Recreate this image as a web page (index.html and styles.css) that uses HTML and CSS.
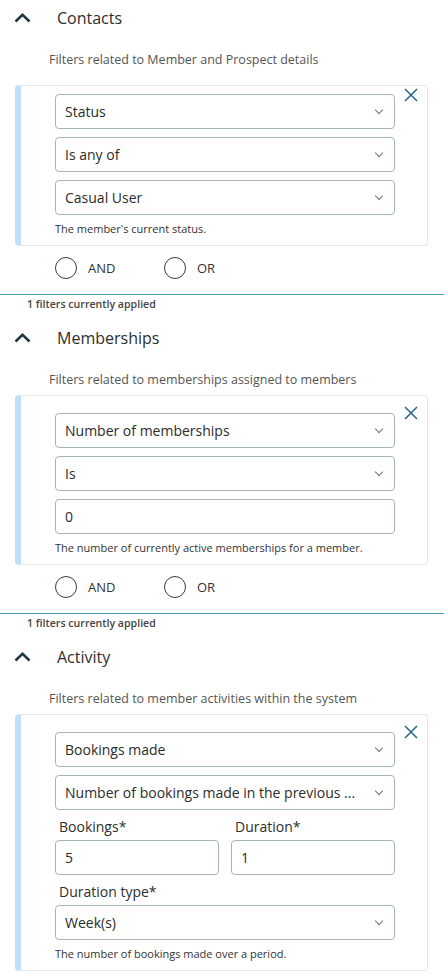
FILE: index.html
```html
<!DOCTYPE html>
<html lang="en">
  <head>
    <meta charset="UTF-8" />
    <meta name="viewport" content="width=device-width, initial-scale=1.0" />
    <title>Filters</title>
    <link rel="stylesheet" href="styles.css">
  </head>

  <body>
    <section class="filter-section first">
      <div class="section-head">
        <svg class="head-chevron" width="17" height="10" viewBox="0 0 17 10"><path d="M1.5 8.5 L8.5 1.8 L15.5 8.5" /></svg>
        <h3>Contacts</h3>
      </div>
      <p class="section-desc">Filters related to Member and Prospect details</p>

      <div class="filter-card">
        <button class="close-btn" aria-label="Remove filter">
          <svg width="14" height="14" viewBox="0 0 14 14"><path d="M1 1 L13 13 M13 1 L1 13" /></svg>
        </button>
        <div class="select">Status<span class="caret"></span></div>
        <div class="select">Is any of<span class="caret"></span></div>
        <div class="select">Casual User<span class="caret"></span></div>
        <p class="help">The member's current status.</p>
      </div>

      <div class="logic">
        <label><span class="radio"></span>AND</label>
        <label><span class="radio"></span>OR</label>
      </div>
      <div class="applied">1 filters currently applied</div>
    </section>

    <section class="filter-section">
      <div class="section-head">
        <svg class="head-chevron" width="17" height="10" viewBox="0 0 17 10"><path d="M1.5 8.5 L8.5 1.8 L15.5 8.5" /></svg>
        <h3>Memberships</h3>
      </div>
      <p class="section-desc">Filters related to memberships assigned to members</p>

      <div class="filter-card">
        <button class="close-btn" aria-label="Remove filter">
          <svg width="14" height="14" viewBox="0 0 14 14"><path d="M1 1 L13 13 M13 1 L1 13" /></svg>
        </button>
        <div class="select">Number of memberships<span class="caret"></span></div>
        <div class="select">Is<span class="caret"></span></div>
        <input class="text-input" type="text" value="0" />
        <p class="help">The number of currently active memberships for a member.</p>
      </div>

      <div class="logic">
        <label><span class="radio"></span>AND</label>
        <label><span class="radio"></span>OR</label>
      </div>
      <div class="applied">1 filters currently applied</div>
    </section>

    <section class="filter-section">
      <div class="section-head">
        <svg class="head-chevron" width="17" height="10" viewBox="0 0 17 10"><path d="M1.5 8.5 L8.5 1.8 L15.5 8.5" /></svg>
        <h3>Activity</h3>
      </div>
      <p class="section-desc">Filters related to member activities within the system</p>

      <div class="filter-card">
        <button class="close-btn" aria-label="Remove filter">
          <svg width="14" height="14" viewBox="0 0 14 14"><path d="M1 1 L13 13 M13 1 L1 13" /></svg>
        </button>
        <div class="select">Bookings made<span class="caret"></span></div>
        <div class="select">Number of bookings made in the previous ...<span class="caret"></span></div>
        <div class="field-row">
          <div class="field">
            <label class="field-label">Bookings*</label>
            <input class="text-input" type="text" value="5" />
          </div>
          <div class="field">
            <label class="field-label">Duration*</label>
            <input class="text-input" type="text" value="1" />
          </div>
        </div>
        <div class="field">
          <label class="field-label">Duration type*</label>
          <div class="select">Week(s)<span class="caret"></span></div>
        </div>
        <p class="help">The number of bookings made over a period.</p>
      </div>
    </section>
  </body>
</html>
```

FILE: styles.css
```css
* {
  box-sizing: border-box;
  margin: 0;
  padding: 0;
}

body {
  font-family: 'Open Sans', 'Noto Sans', sans-serif;
  background: #fff;
  color: #333;
  width: 444px;
  padding-top: 6px;
}

.filter-section {
  display: flex;
  flex-direction: column;
}

.section-head {
  display: flex;
  align-items: center;
  height: 24px;
  padding-left: 14px;
}

.head-chevron path {
  fill: none;
  stroke: #1f3542;
  stroke-width: 2.5;
}

.section-head h3 {
  font-size: 16px;
  font-weight: 400;
  color: #2e2e2e;
  margin-left: 26px;
  line-height: 24px;
}

.section-desc {
  font-size: 12.5px;
  line-height: 18px;
  color: #555;
  margin: 21px 0 0 49px;
}

.filter-card {
  position: relative;
  margin: 6px 16px 0 15px;
  border: 1px solid #e4e8ea;
  border-left: 6px solid #bfe0fb;
  border-radius: 4px;
  padding: 17px 32px 10px 34px;
  display: flex;
  flex-direction: column;
  gap: 8px;
}

.first .filter-card {
  margin-top: 16px;
  padding-top: 8px;
}

.close-btn {
  position: absolute;
  top: 9px;
  right: 8px;
  background: transparent;
  border: none;
  width: 16px;
  height: 16px;
  display: flex;
  align-items: center;
  justify-content: center;
  cursor: pointer;
}

.first .close-btn {
  top: 1px;
}

.close-btn path {
  stroke: #2c6990;
  stroke-width: 1.6;
  fill: none;
}

.select,
.text-input {
  height: 35px;
  border: 1px solid #a5b3bb;
  border-radius: 4px;
  padding: 0 10px 0 9px;
  font-family: inherit;
  font-size: 14px;
  color: #2b2b2b;
  background: #fff;
  width: 100%;
}

.select {
  display: flex;
  align-items: center;
  justify-content: space-between;
  white-space: nowrap;
}

.caret {
  flex: none;
  width: 6px;
  height: 6px;
  border-right: 1.2px solid #66767f;
  border-bottom: 1.2px solid #66767f;
  transform: rotate(45deg);
  margin: -3px 2px 0 0;
}

.text-input {
  outline: none;
}

.field-row {
  display: grid;
  grid-template-columns: 1fr 1fr;
  gap: 12px;
}

.field {
  display: flex;
  flex-direction: column;
}

.field-label {
  font-size: 14px;
  line-height: 18px;
  margin: 0 0 4px 4px;
  color: #2e2e2e;
}

.help {
  font-size: 11px;
  line-height: 12px;
  color: #333;
}

.logic {
  display: flex;
  align-items: center;
  margin-top: 11px;
  padding: 0 0 15px 55px;
  border-bottom: 1px solid #4a9fb0;
}

.logic label {
  display: flex;
  align-items: center;
  font-size: 13px;
  color: #333;
  width: 109px;
}

.radio {
  width: 22px;
  height: 22px;
  border: 1.5px solid #2b3f4a;
  border-radius: 50%;
  margin-right: 11px;
}

.applied {
  font-size: 10.6px;
  line-height: 14px;
  font-weight: 600;
  color: #444;
  margin: 2px 0 15px 27px;
}
```
